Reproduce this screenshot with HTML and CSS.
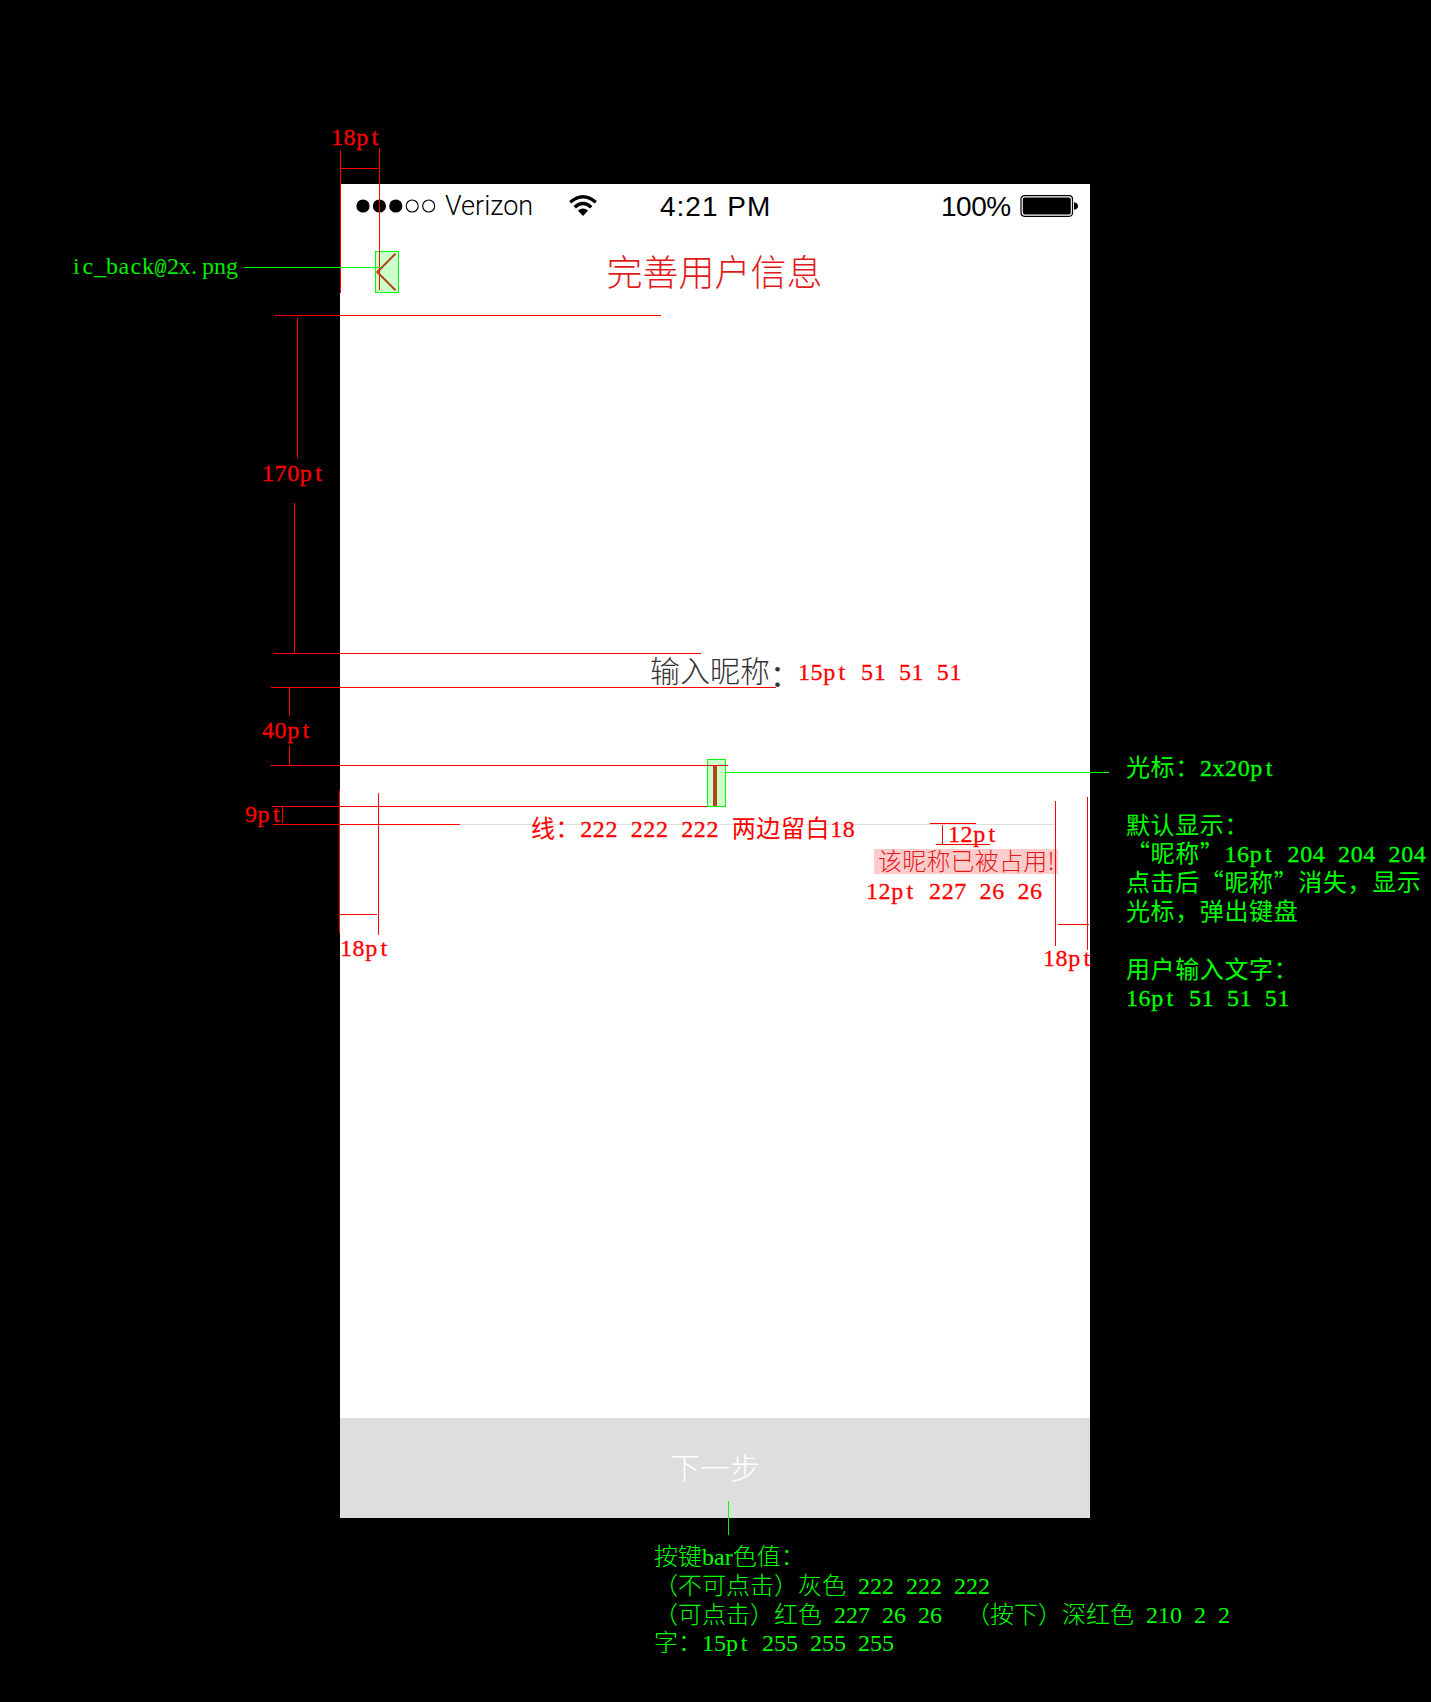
FILE: index.html
```html
<!DOCTYPE html>
<html lang="zh-CN">
<head>
<meta charset="utf-8">
<title>完善用户信息</title>
<link rel="stylesheet" href="styles.css">
</head>
<body>
<main class="phone">
  <header class="status">
    <svg class="signal" width="82" height="16" viewBox="0 0 82 16">
      <circle cx="7" cy="8" r="6.6"/><circle cx="23.4" cy="8" r="6.6"/><circle cx="39.8" cy="8" r="6.6"/>
      <circle class="empty" cx="56.2" cy="8" r="6"/><circle class="empty" cx="72.7" cy="8" r="6"/>
    </svg>
    <span class="carrier">Verizon</span>
    <svg class="wifi" width="28" height="22" viewBox="0 0 28 22">
      <path class="arc" d="M1.2 7.3Q14-3.8 26.8 7.3M5.7 12.2Q14 4.8 22.3 12.2"/>
      <path d="M8.9 15.6Q14 11.2 19.1 15.6L14 21Z"/>
    </svg>
    <span class="time">4:21 PM</span>
    <span class="percent">100%</span>
    <svg class="battery" width="58" height="24" viewBox="0 0 58 24">
      <rect class="shell" x="1" y="1.7" width="51.5" height="20.6" rx="3.5"/>
      <rect x="2.8" y="3.5" width="48" height="17" rx="2"/>
      <path d="M54 8.2Q58 8.7 58 12T54 15.8Z"/>
    </svg>
  </header>
  <nav class="nav">
    <svg class="back" width="24" height="42" viewBox="0 0 24 42"><path d="M20.5 2.7L2.3 21L20.5 39.3"/></svg>
    <h1 class="title">完善用户信息</h1>
  </nav>
  <section class="form">
    <label class="label">输入昵称<span class="colon">：</span></label>
    <div class="field"><i class="caret"></i></div>
    <p class="error">该昵称已被占用!</p>
  </section>
  <button class="next">下一步</button>
</main>

<svg class="guides" width="1431" height="1702" viewBox="0 0 1431 1702">
  <g class="areas">
    <rect x="375.5" y="251.5" width="23" height="41"/>
    <rect x="707.5" y="759.5" width="18" height="47"/>
  </g>
  <path class="red" d="M340.5 150V293M379.5 148V290M340 168.5H378M275 315.5H661M297.5 318V458M294.5 503V653M273 653.5H701M271 687.5H776M289.5 687V716M289.5 746V765M271 765.5H728M272 806.5H707M273 824.5H460M282.5 807V823M339.5 790V933M378.5 793V935M340 914.5H377M930 823.5H976M942.5 825V844M936 844.5H990M1055.5 801V946M1087.5 797V950M1058 924.5H1089"/>
  <path class="green" d="M244 267.5H381M726 772.5H1109M728.5 1501V1535"/>
  <text class="file" y="274" x="73 82.500 94 106 118.500 130.500 142 154.500 167 178.500 191 202 214 226">ic_back<tspan class="at">@</tspan>2x.png</text>
</svg>

<p class="note bold margin-top"><span class="n">18p<i>t</i></span></p>
<p class="note bold offset-top"><span class="n">170p<i>t</i></span></p>
<p class="note bold offset-mid"><span class="n">40p<i>t</i></span></p>
<p class="note bold offset-line"><span class="n">9p<i>t</i></span></p>
<p class="note bold margin-left"><span class="n">18p<i>t</i></span></p>
<p class="note bold label-spec"><span class="n">15p<i>t</i> 51 51 51</span></p>
<p class="note bold line-spec">线：<span class="n">222 222 222 </span>两边留白<span class="n">18</span></p>
<p class="note bold error-gap"><span class="n">12p<i>t</i></span></p>
<p class="note bold error-spec"><span class="n">12p<i>t</i> 227 26 26</span></p>
<p class="note bold margin-right"><span class="n">18p<i>t</i></span></p>
<div class="note bold lime caret-spec">光标：<span class="n">2x20p<i>t</i></span><br><br>默认显示：<br>“昵称”<span class="n">16p<i>t</i> 204 204 204</span><br>点击后“昵称”消失，显示<br>光标，弹出键盘<br><br>用户输入文字：<br><span class="n">16p<i>t</i> 51 51 51</span></div>
<div class="note lime bar-spec">按键<span class="n">bar</span>色值：<br>（不可点击）灰色<span class="n"> 222 222 222</span><br>（可点击）红色<span class="n"> 227 26 26  </span>（按下）深红色<span class="n"> 210 2 2</span><br>字：<span class="n">15p<i>t</i> 255 255 255</span></div>
</body>
</html>
```
FILE: styles.css
```css
* { box-sizing: border-box; }
body {
  margin: 0;
  height: 1702px;
  padding: 184px 341px 0 340px;
  background: #000;
  position: relative;
  overflow: hidden;
  font-family: "Noto Sans CJK SC", sans-serif;
}
h1, p { margin: 0; font-weight: 300; }

.phone {
  width: 750px;
  height: 1334px;
  background: #fff;
  display: flex;
  flex-direction: column;
}
.status {
  height: 44px;
  padding: 0 12px 0 16px;
  display: flex;
  align-items: center;
  font-family: "Liberation Sans", sans-serif;
  color: #000;
  line-height: 45px;
}
.status svg { flex: none; }
.signal .empty { fill: none; stroke: #000; stroke-width: 1.1; }
.carrier { width: 124px; padding-left: 7px; font: 300 27px/46px Roboto, sans-serif; }
.wifi { margin-left: 7px; }
.wifi .arc { fill: none; stroke: #000; stroke-width: 3.3; }
.time { padding-left: 63px; font-size: 28px; letter-spacing: 1px; white-space: nowrap; }
.percent { width: 79px; margin-left: auto; font-size: 28px; letter-spacing: -.5px; }
.battery .shell { fill: none; stroke: #000; stroke-width: 1.2; }

.nav {
  height: 88px;
  display: flex;
  align-items: center;
  padding: 0 35px;
}
.back path { fill: none; stroke: #e31a1a; stroke-width: 2; }
.title {
  flex: 1;
  margin: 0 25px 4px 0;
  text-align: center;
  font-size: 36px;
  line-height: 52px;
  color: #e31a1a;
}

.form { flex: 1; padding: 331px 36px 0; display: flex; flex-direction: column; }
.label { margin-left: 274px; font-size: 30px; line-height: 44px; font-weight: 300; color: #333; }
.colon { position: relative; top: 4px; font-weight: 400; }
.field {
  height: 134px;
  border-bottom: 1px solid #dedede;
  margin-right: -1px;
  display: flex;
  justify-content: center;
  align-items: flex-end;
  padding: 0 1px 18px 0;
}
.caret { width: 4px; height: 41px; background: #e31a1a; }
.error {
  width: 184px;
  height: 25px;
  margin: 24px -4px 0 auto;
  padding-left: 4px;
  background: #fcc;
  color: #e31a1a;
  font-size: 24px;
  line-height: 22px;
  letter-spacing: .2px;
  white-space: nowrap;
}
.next {
  height: 100px;
  border: 0;
  padding: 0 0 4px;
  background: #dedede;
  color: #fff;
  font: 300 30px/96px "Noto Sans CJK SC", sans-serif;
}

.guides { position: absolute; left: 0; top: 0; }
.guides path { fill: none; stroke-width: 1; shape-rendering: crispEdges; }
.guides .red { stroke: #f00; }
.guides .green { stroke: #0f0; }
.areas rect { fill: rgba(0, 255, 0, .2); stroke: #0f0; }
.file { font: 24px "Liberation Serif", serif; fill: #0e0; }
.file .at { font: 20px "Liberation Mono", monospace; }

.note {
  position: absolute;
  font-size: 24px;
  line-height: 28.8px;
  font-weight: 400;
  color: #f00;
  white-space: pre;
}
.note .n { font-family: "Liberation Serif", serif; line-height: 0; word-spacing: 6px; }
.note i { display: inline-block; width: 12px; text-align: center; font-style: normal; line-height: 0; }
.bold { letter-spacing: .62px; }
.bold .n { -webkit-text-stroke: .3px; }
.bold i { width: 12.6px; }
.lime { color: #0f0; }
.bar-spec { font-weight: 300; }

.margin-top { left: 331px; top: 121px; }
.offset-top { left: 262px; top: 457px; }
.offset-mid { left: 262px; top: 714px; }
.offset-line { left: 245px; top: 798px; }
.margin-left { left: 340px; top: 932px; }
.label-spec { left: 798px; top: 656px; }
.line-spec { left: 531px; top: 813px; }
.error-gap { left: 948px; top: 818px; }
.error-spec { left: 866px; top: 875px; }
.margin-right { left: 1043px; top: 942px; }
.caret-spec { left: 1126px; top: 752px; }
.bar-spec { left: 654px; top: 1541px; }
```
